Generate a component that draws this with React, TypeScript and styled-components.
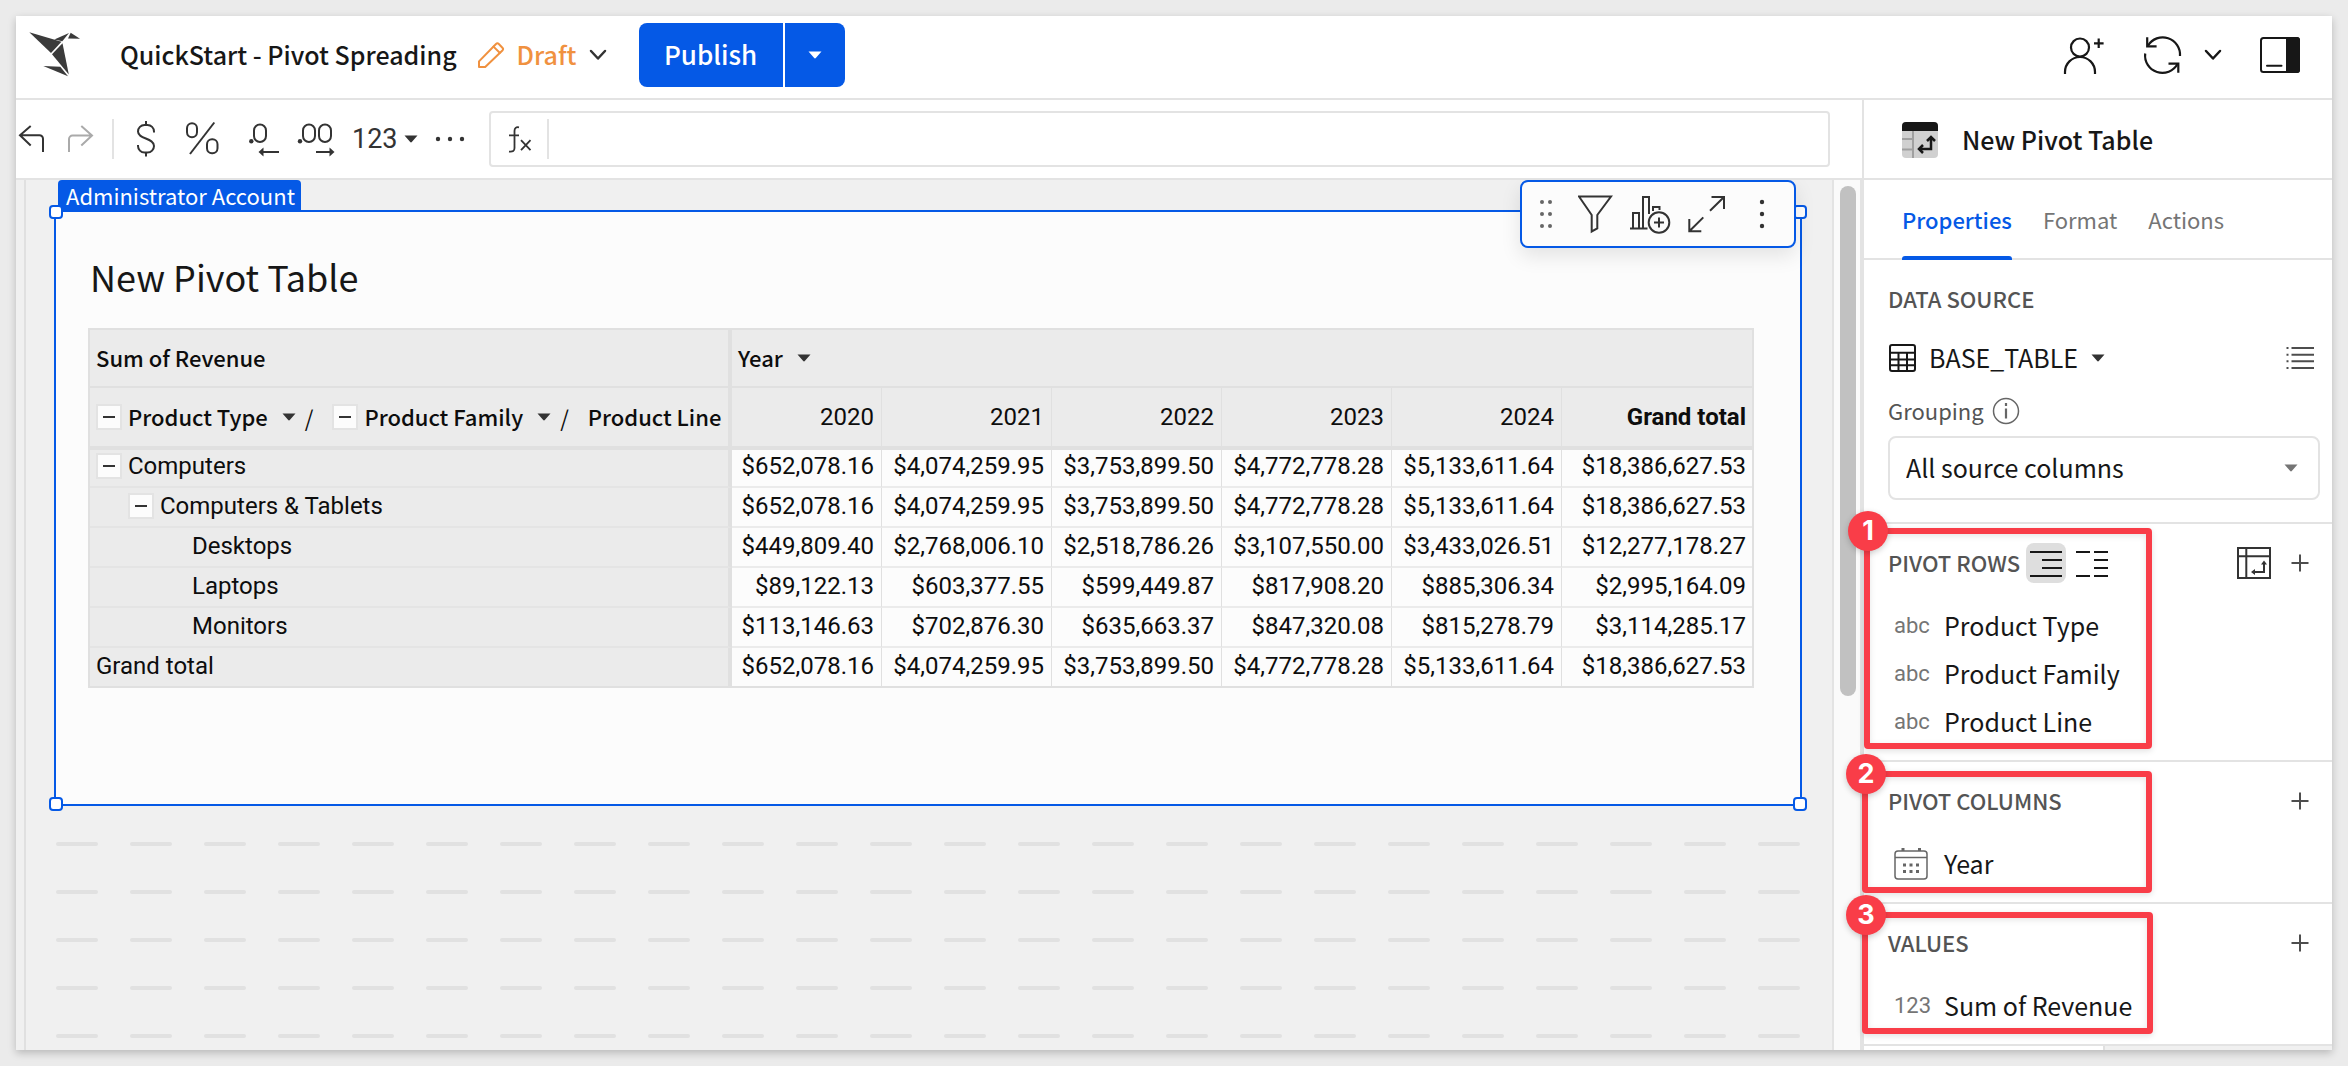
import React from "react";
import styled, { createGlobalStyle, css } from "styled-components";

const color = {
  page: "#ebebeb",
  white: "#ffffff",
  surface: "#fcfcfc",
  canvas: "#f0f0f0",
  head: "#ebebeb",
  line: "#e3e3e3",
  tableLine: "#e0e0e0",
  blue: "#0559e6",
  red: "#f93d48",
  orange: "#f0913f",
  ink: "#171717",
  icon: "#333333",
  label: "#545454",
  muted: "#757575",
};

const sans = `"Noto Sans CJK SC", "Noto Sans", sans-serif`;
const roboto = `Roboto, "Liberation Sans", sans-serif`;

const GlobalStyle = createGlobalStyle`
  *, *::before, *::after { box-sizing: border-box; }
  body {
    margin: 0;
    background: ${color.page};
    color: ${color.ink};
    font-family: ${sans};
    font-size: 25px;
    line-height: 32px;
  }
  svg { display: block; flex: none; }
`;

/* ---------- shared ---------- */

const plainButton = css`
  display: flex;
  align-items: center;
  margin: 0;
  padding: 0;
  border: 0;
  background: none;
  color: inherit;
  font: inherit;
  cursor: pointer;
`;

const PlainButton = styled.button<{ $gap?: number }>`
  ${plainButton}
  gap: ${(p) => p.$gap ?? 0}px;
`;

const IconButton = styled.button<{ $width?: number; $active?: boolean }>`
  ${plainButton}
  justify-content: center;
  width: ${(p) => p.$width ?? 40}px;
  height: 40px;
  border-radius: 8px;
  background: ${(p) => (p.$active ? "#dedede" : "none")};
`;

/* Keeps capital letters optically centred inside bars. */
const Label = styled.span<{ $size?: number; $weight?: number; $color?: string }>`
  padding-bottom: 3px;
  white-space: nowrap;
  font-size: ${(p) => p.$size ?? 25}px;
  font-weight: ${(p) => p.$weight ?? 400};
  color: ${(p) => p.$color ?? "inherit"};
`;

type IconProps = {
  w: number;
  h: number;
  stroke?: string;
  sw?: number;
  round?: boolean;
  children: React.ReactNode;
};

const Icon = ({ w, h, stroke = color.icon, sw = 2, round, children }: IconProps) => (
  <svg
    width={w}
    height={h}
    viewBox={`0 0 ${w} ${h}`}
    fill="none"
    stroke={stroke}
    strokeWidth={sw}
    strokeLinecap={round ? "round" : "butt"}
    strokeLinejoin={round ? "round" : "miter"}
    aria-hidden="true"
  >
    {children}
  </svg>
);

const Caret = ({ fill = color.icon }: { fill?: string }) => (
  <Icon w={14} h={8} stroke="none">
    <path d="M0.5 0.5h13L8 6.8a1.3 1.3 0 0 1-2 0z" fill={fill} />
  </Icon>
);

const Chevron = ({ stroke = color.icon }: { stroke?: string }) => (
  <Icon w={18} h={12} stroke={stroke} sw={2.5} round>
    <path d="M2 2l7 7.5L16 2" />
  </Icon>
);

const Plus = () => (
  <Icon w={18} h={18} stroke="#4d4d4d">
    <path d="M9 0.5v17M0.5 9h17" />
  </Icon>
);

/* ---------- app shell ---------- */

const Shell = styled.div`
  display: flex;
  flex-direction: column;
  height: calc(100vh - 32px);
  margin: 16px;
  overflow: hidden;
  background: ${color.white};
  box-shadow: 0 3px 8px rgba(0, 0, 0, 0.22);
`;

const Backdrop = styled.div`
  display: flow-root;
`;

const Header = styled.header`
  display: flex;
  flex: none;
  align-items: center;
  height: 84px;
  padding: 0 32px 4px 12px;
  border-bottom: 2px solid ${color.line};
`;

const DocTitle = styled.h1`
  margin: 0 20px 0 38px;
  padding-bottom: 2px;
  white-space: nowrap;
  font-size: 25px;
  font-weight: 500;
`;

const SplitButton = styled.div`
  display: flex;
  gap: 2px;
  height: 64px;
  margin: 0 auto 0 32px;
`;

const PrimaryButton = styled.button<{ $side: "left" | "right" }>`
  ${plainButton}
  justify-content: center;
  width: ${(p) => (p.$side === "left" ? 144 : 60)}px;
  border-radius: ${(p) => (p.$side === "left" ? "8px 0 0 8px" : "0 8px 8px 0")};
  background: ${color.blue};
  color: ${color.white};
`;

const HeaderActions = styled.div`
  display: flex;
  align-items: center;
  gap: 38px;
`;

const RefreshGroup = styled.div`
  display: flex;
  align-items: center;
  gap: 20px;
`;

const Body = styled.div`
  display: flex;
  flex: 1;
  min-height: 0;
`;

const Main = styled.main`
  display: flex;
  flex: 1;
  flex-direction: column;
  min-width: 0;
`;

/* ---------- toolbar ---------- */

const Toolbar = styled.div`
  display: flex;
  flex: none;
  align-items: center;
  height: 80px;
  padding: 0 32px 0 2px;
  border-bottom: 2px solid ${color.line};
`;

const ToolGroup = styled.div<{ $gap: number; $before?: number }>`
  display: flex;
  align-items: center;
  gap: ${(p) => p.$gap}px;
  margin-left: ${(p) => p.$before ?? 0}px;
`;

const Divider = styled.span<{ $before: number; $after: number }>`
  flex: none;
  width: 2px;
  height: 40px;
  margin: 0 ${(p) => p.$after}px 0 ${(p) => p.$before}px;
  background: ${color.line};
`;

const NumberFormat = styled.span`
  font-family: ${roboto};
  font-size: 27px;
  color: ${color.icon};
`;

const FormulaBar = styled.div`
  display: flex;
  flex: 1;
  align-items: center;
  height: 56px;
  margin-left: 24px;
  padding-left: 16px;
  border: 2px solid ${color.line};
  border-radius: 4px;
`;

const FormulaInput = styled.input`
  flex: 1;
  min-width: 0;
  height: 40px;
  padding: 0 12px;
  border: 0;
  outline: 0;
  background: none;
  color: inherit;
  font: inherit;
`;

/* ---------- canvas ---------- */

const Workspace = styled.div`
  display: flex;
  flex: 1;
  min-height: 0;
  padding-left: 8px;
  overflow: hidden;
  background: ${color.canvas};
`;

const Canvas = styled.div`
  flex: 1;
  min-width: 0;
  padding: 30px 30px 0 28px;
  border-left: 2px solid ${color.tableLine};
`;

const ScrollTrack = styled.div`
  flex: none;
  width: 30px;
  padding: 6px 4px 0 6px;
  border: solid ${color.line};
  border-width: 0 2px;
  background: #fafafa;
`;

const ScrollThumb = styled.div`
  width: 16px;
  height: 59%;
  border-radius: 8px;
  background: #c1c1c1;
`;

const Frame = styled.section`
  position: relative;
  padding: 42px 32px 116px;
  border: 2px solid ${color.blue};
  background: ${color.surface};
`;

const Handle = styled.span<{ $v: "top" | "bottom"; $h: "left" | "right" }>`
  position: absolute;
  ${(p) => p.$v}: -7px;
  ${(p) => p.$h}: -7px;
  width: 14px;
  height: 14px;
  border: 2px solid ${color.blue};
  border-radius: 4px;
  background: ${color.white};
`;

const OwnerTag = styled.div`
  position: absolute;
  bottom: 100%;
  left: 2px;
  height: 32px;
  padding: 0 6px 0 8px;
  border-radius: 4px 4px 0 0;
  background: ${color.blue};
  color: ${color.white};
  font-size: 22px;
  line-height: 30px;
  white-space: nowrap;
`;

const FloatingBar = styled.div`
  position: absolute;
  top: -32px;
  right: 4px;
  display: flex;
  align-items: center;
  gap: 16px;
  height: 68px;
  padding: 0 12px 0 8px;
  border: 2px solid ${color.blue};
  border-radius: 8px;
  background: ${color.surface};
  box-shadow: 0 8px 20px rgba(0, 0, 0, 0.1);
`;

const ElementTitle = styled.h2`
  margin: 0 0 30px 2px;
  font-size: 36px;
  font-weight: 400;
  line-height: 44px;
`;

const DropRow = styled.div`
  display: grid;
  grid-template-columns: repeat(24, 1fr);
  gap: 32px;
  height: 4px;
  margin: 36px 2px 44px;

  & + & {
    margin-top: 44px;
  }
`;

const DropMark = styled.span`
  border-radius: 2px;
  background: #e1e1e1;
`;

/* ---------- pivot table ---------- */

const Pivot = styled.table`
  table-layout: fixed;
  width: 1666px;
  border: 2px solid ${color.tableLine};
  border-collapse: separate;
  border-spacing: 0;
  color: #0d0d0d;
  font-family: ${roboto};
  font-size: 24px;
`;

const HeadCell = styled.th<{ $align?: "left" | "right"; $rowHead?: boolean; $last?: boolean; $bold?: boolean; $sub?: boolean }>`
  height: ${(p) => (p.$sub ? 60 : 58)}px;
  padding: 0 ${(p) => (p.$align === "right" ? (p.$last ? 6 : 7) : 5)}px 0 6px;
  border: solid ${color.tableLine};
  border-width: 0 ${(p) => (p.$rowHead ? 4 : p.$last ? 0 : 1)}px 2px 0;
  background: ${color.head};
  font-weight: ${(p) => (p.$bold ? 700 : 400)};
  text-align: ${(p) => p.$align ?? "left"};
  white-space: nowrap;
`;

const HeadRow = styled.div`
  display: flex;
  align-items: center;
  font-family: ${sans};
  font-size: 22px;
  font-weight: 500;
`;

const HeadName = styled.span`
  padding-bottom: 3px;
`;

const Slash = styled.span`
  margin: 0 19px 0 9px;
  font-weight: 400;
`;

const RowHead = styled.th<{ $depth: number }>`
  height: 40px;
  padding: 0 5px 2px ${(p) => 6 + p.$depth * 32}px;
  border-right: 4px solid ${color.tableLine};
  border-bottom: 2px solid #e4e4e4;
  background: ${color.head};
  font-weight: 400;
  line-height: 36px;
  text-align: left;
`;

const TreeLabel = styled.div`
  display: flex;
  align-items: center;
  height: 36px;
`;

const Cell = styled.td<{ $last?: boolean }>`
  height: 40px;
  padding: 0 ${(p) => (p.$last ? 6 : 7)}px 2px 0;
  border-right: ${(p) => (p.$last ? 0 : 1)}px solid ${color.tableLine};
  border-bottom: 2px solid #ebebeb;
  line-height: 36px;
  text-align: right;
  white-space: nowrap;
`;

const BodyRows = styled.tbody`
  tr:first-child > * {
    box-shadow: inset 0 2px ${color.tableLine};
  }
  tr:last-child > * {
    height: 38px;
    border-bottom: 0;
  }
`;

const ToggleBox = styled.button`
  ${plainButton}
  flex: none;
  justify-content: center;
  width: 26px;
  height: 26px;
  margin-right: 6px;
  border: 2px solid #e3e3e3;
  background: ${color.surface};
`;

const years = ["2020", "2021", "2022", "2023", "2024"];

type PivotRow = { name: string; depth: number; open?: boolean; values: string[] };

const rows: PivotRow[] = [
  { name: "Computers", depth: 0, open: true, values: ["$652,078.16", "$4,074,259.95", "$3,753,899.50", "$4,772,778.28", "$5,133,611.64", "$18,386,627.53"] },
  { name: "Computers & Tablets", depth: 1, open: true, values: ["$652,078.16", "$4,074,259.95", "$3,753,899.50", "$4,772,778.28", "$5,133,611.64", "$18,386,627.53"] },
  { name: "Desktops", depth: 3, values: ["$449,809.40", "$2,768,006.10", "$2,518,786.26", "$3,107,550.00", "$3,433,026.51", "$12,277,178.27"] },
  { name: "Laptops", depth: 3, values: ["$89,122.13", "$603,377.55", "$599,449.87", "$817,908.20", "$885,306.34", "$2,995,164.09"] },
  { name: "Monitors", depth: 3, values: ["$113,146.63", "$702,876.30", "$635,663.37", "$847,320.08", "$815,278.79", "$3,114,285.17"] },
  { name: "Grand total", depth: 0, values: ["$652,078.16", "$4,074,259.95", "$3,753,899.50", "$4,772,778.28", "$5,133,611.64", "$18,386,627.53"] },
];

const Toggle = ({ name }: { name: string }) => (
  <ToggleBox aria-label={`Collapse ${name}`}>
    <Icon w={12} h={2}>
      <path d="M0 1h12" />
    </Icon>
  </ToggleBox>
);

const PivotTable = () => (
  <Pivot>
    <colgroup>
      <col width={642} />
      <col width={150} />
      <col width={170} />
      <col width={170} />
      <col width={170} />
      <col width={170} />
      <col width={190} />
    </colgroup>
    <thead>
      <tr>
        <HeadCell $rowHead>
          <HeadRow>
            <HeadName>Sum of Revenue</HeadName>
          </HeadRow>
        </HeadCell>
        <HeadCell colSpan={6} $last>
          <HeadRow>
            <PlainButton $gap={14}>
              <HeadName>Year</HeadName>
              <Caret />
            </PlainButton>
          </HeadRow>
        </HeadCell>
      </tr>
      <tr>
        <HeadCell $rowHead $sub>
          <HeadRow>
            {["Product Type", "Product Family"].map((name) => (
              <React.Fragment key={name}>
                <Toggle name={name} />
                <PlainButton $gap={14}>
                  <HeadName>{name}</HeadName>
                  <Caret />
                </PlainButton>
                <Slash>/</Slash>
              </React.Fragment>
            ))}
            <HeadName>Product Line</HeadName>
          </HeadRow>
        </HeadCell>
        {years.map((y) => (
          <HeadCell key={y} $align="right" $sub>
            {y}
          </HeadCell>
        ))}
        <HeadCell $align="right" $last $bold $sub>
          Grand total
        </HeadCell>
      </tr>
    </thead>
    <BodyRows>
      {rows.map((row) => (
        <tr key={row.name}>
          <RowHead scope="row" $depth={row.depth}>
            <TreeLabel>
              {row.open && <Toggle name={row.name} />}
              {row.name}
            </TreeLabel>
          </RowHead>
          {row.values.map((v, i) => (
            <Cell key={i} $last={i === row.values.length - 1}>
              {v}
            </Cell>
          ))}
        </tr>
      ))}
    </BodyRows>
  </Pivot>
);

/* ---------- sidebar ---------- */

const Sidebar = styled.aside`
  display: flex;
  flex: none;
  flex-direction: column;
  width: 470px;
  border-left: 2px solid ${color.line};
`;

const PanelHead = styled.div`
  display: flex;
  flex: none;
  align-items: center;
  gap: 24px;
  height: 80px;
  padding: 2px 0 0 38px;
  border-bottom: 2px solid ${color.line};
`;

const Tabs = styled.div`
  display: flex;
  flex: none;
  gap: 31px;
  height: 80px;
  padding: 2px 0 0 38px;
  border-bottom: 2px solid ${color.line};
`;

const Tab = styled.button<{ $active?: boolean }>`
  ${plainButton}
  position: relative;
  color: ${(p) => (p.$active ? color.blue : color.muted)};

  &::after {
    content: "";
    position: absolute;
    right: 0;
    bottom: -2px;
    left: 0;
    height: 4px;
    border-radius: 3px 3px 0 0;
    background: ${(p) => (p.$active ? color.blue : "none")};
  }
`;

const Section = styled.section<{ $bottom?: number }>`
  position: relative;
  flex: none;
  padding: 0 12px ${(p) => p.$bottom ?? 14}px 24px;
  border-bottom: 2px solid ${color.line};
`;

const SectionHead = styled.div`
  display: flex;
  align-items: center;
  gap: 6px;
  height: 78px;
`;

const SectionTitle = styled.h3`
  margin: 0;
  padding-bottom: 3px;
  white-space: nowrap;
  color: ${color.label};
  font-size: 22px;
  font-weight: 500;
`;

const Spacer = styled.span`
  flex: 1;
`;

const SourceRow = styled.div`
  display: flex;
  align-items: center;
  justify-content: space-between;
  height: 40px;
`;

const GroupingRow = styled.div`
  display: flex;
  align-items: center;
  gap: 8px;
  height: 50px;
  margin-top: 8px;
`;

const FieldLabel = styled.label`
  padding-bottom: 3px;
  color: ${color.label};
  font-size: 22px;
`;

const SelectBox = styled.div`
  display: grid;
  align-items: center;

  & > * {
    grid-area: 1 / 1;
  }
  & > svg {
    margin-right: 22px;
    justify-self: end;
    pointer-events: none;
  }
`;

const Select = styled.select`
  width: 100%;
  height: 64px;
  padding: 0 48px 3px 16px;
  border: 2px solid ${color.line};
  border-radius: 8px;
  appearance: none;
  background: ${color.white};
  color: inherit;
  font: inherit;
`;

const FieldList = styled.ul`
  margin: 0;
  padding: 0 0 0 6px;
  list-style: none;
`;

const Field = styled.li`
  display: flex;
  align-items: center;
  height: 48px;
`;

const FieldType = styled.span`
  flex: none;
  width: 50px;
  color: ${color.muted};
  font-family: ${roboto};
  font-size: 22px;
`;

const Callout = styled.div<{ $left: number; $top: number; $width: number; $height: number }>`
  position: absolute;
  top: ${(p) => p.$top}px;
  left: ${(p) => p.$left}px;
  z-index: 1;
  width: ${(p) => p.$width}px;
  height: ${(p) => p.$height}px;
  border: 6px solid ${color.red};
  border-radius: 4px;
  box-shadow: 0 2px 6px rgba(0, 0, 0, 0.12), inset 0 2px 6px rgba(0, 0, 0, 0.1);
  pointer-events: none;
`;

const CalloutBadge = styled.span`
  position: absolute;
  top: -23px;
  left: -22px;
  width: 40px;
  height: 40px;
  border-radius: 20px;
  background: ${color.red};
  box-shadow: 0 2px 6px rgba(0, 0, 0, 0.2);
  color: ${color.white};
  font-family: Inter, "Liberation Sans", sans-serif;
  font-size: 27px;
  font-weight: 700;
  line-height: 40px;
  text-align: center;
`;

const BottomBar = styled.div`
  display: flex;
  flex: 1;
  background: ${color.canvas};
`;

const BottomStrip = styled.div`
  width: 241px;
  border-right: 2px solid ${color.tableLine};
  background: ${color.white};
`;

const CalendarIcon = () => (
  <Icon w={34} h={32} stroke="#666666" sw={1.5}>
    <rect x="1" y="3" width="32" height="28" rx="3" />
    <path d="M1 9.5h32" />
    <path d="M9 0v3M25.5 0v3" strokeWidth="3" />
    <path d="M9 17h3M15.5 17h3M22 17h3M9 23.5h3M15.5 23.5h3M22 23.5h3" strokeWidth="3" />
  </Icon>
);

const rowFields = ["Product Type", "Product Family", "Product Line"];

const App = () => (
  <Backdrop>
    <GlobalStyle />
    <Shell>
      <Header>
        <Icon w={54} h={48} stroke="none">
          <g fill="#3b3b3b">
            <path d="M1.3 1.2L33.5 10.7 23 22z" />
            <path d="M26.3 8.4L41 2 34.3 10.2z" />
            <path d="M42.7 1.7L52 7.7 40 7.4z" />
            <path d="M34.5 12.3L40.8 43.5 24 23.3z" />
            <path d="M15.3 35L32.3 35.8 40 45.3z" />
          </g>
        </Icon>
        <DocTitle>QuickStart - Pivot Spreading</DocTitle>
        <PlainButton $gap={12}>
          <Icon w={28} h={28} stroke={color.orange} round>
            <path d="M2 26v-5.6L19 3a2 2 0 0 1 2.8 0l3.6 3.7a2 2 0 0 1 0 2.8L8.2 26z" />
            <path d="M16.5 5.6l6.2 6.2" />
          </Icon>
          <Label $weight={500} $color={color.orange}>
            Draft
          </Label>
          <Chevron />
        </PlainButton>
        <SplitButton>
          <PrimaryButton $side="left">
            <Label $size={26} $weight={500}>
              Publish
            </Label>
          </PrimaryButton>
          <PrimaryButton $side="right" aria-label="Publish options">
            <Caret fill={color.white} />
          </PrimaryButton>
        </SplitButton>
        <HeaderActions>
          <PlainButton aria-label="Share">
            <Icon w={42} h={40} stroke={color.ink} sw={2.2}>
              <circle cx="18" cy="12.5" r="9" />
              <path d="M3 39v-2a15 15 0 0 1 30 0v2" />
              <path d="M36.7 3.5v9.6M32 8.3h9.6" />
            </Icon>
          </PlainButton>
          <RefreshGroup>
            <PlainButton aria-label="Refresh">
              <Icon w={42} h={42} stroke={color.ink} sw={2.2}>
                <path d="M6 11.6A17.3 17.3 0 0 1 38 22M3.2 19.5A17.3 17.3 0 0 0 35.5 30" />
                <path d="M5.2 3.3v9h9.4M26.5 29.6h9.8v9.2" />
              </Icon>
            </PlainButton>
            <PlainButton aria-label="Refresh options">
              <Chevron stroke={color.ink} />
            </PlainButton>
          </RefreshGroup>
          <PlainButton aria-label="Toggle panel">
            <Icon w={40} h={36} stroke={color.ink}>
              <rect x="1" y="1" width="38" height="34" rx="2.5" />
              <path d="M26 0h11a3 3 0 0 1 3 3v30a3 3 0 0 1-3 3H26z" fill={color.ink} stroke="none" />
              <path d="M7 28.7h14.5" strokeLinecap="round" />
            </Icon>
          </PlainButton>
        </HeaderActions>
      </Header>

      <Body>
        <Main>
          <Toolbar>
            <ToolGroup $gap={20}>
              <PlainButton aria-label="Undo">
                <Icon w={28} h={28}>
                  <path d="M12.7 1L2 10.2l10.7 10.3M2 10.2h19.5a3.5 3.5 0 0 1 3.5 3.5V27" />
                </Icon>
              </PlainButton>
              <PlainButton aria-label="Redo">
                <Icon w={28} h={28} stroke="#aaaaaa">
                  <path d="M15.3 1L26 10.6 15.3 20.5M26 10.6H6.5A3.5 3.5 0 0 0 3 14.1V27" />
                </Icon>
              </PlainButton>
            </ToolGroup>
            <Divider $before={18} $after={22} />
            <ToolGroup $gap={27}>
              <PlainButton aria-label="Currency">
                <Icon w={22} h={38}>
                  <path d="M18 12.5v-1A6.5 6.5 0 0 0 11.5 5h-3A6.5 6.5 0 0 0 2 11.5C2 19.5 18 17.5 18 26a6.5 6.5 0 0 1-6.5 6.5h-3A6.5 6.5 0 0 1 2 26v-1M10 1v4M10 32.5v4" />
                </Icon>
              </PlainButton>
              <PlainButton aria-label="Percent">
                <Icon w={36} h={36}>
                  <rect x="2" y="2.3" width="10" height="14" rx="5" />
                  <rect x="22" y="18.3" width="10.5" height="14" rx="5" />
                  <path d="M29.3 1.5L5 33" />
                </Icon>
              </PlainButton>
              <PlainButton aria-label="Decrease decimals">
                <Icon w={32} h={38}>
                  <circle cx="3.3" cy="21.3" r="2.2" fill={color.icon} stroke="none" />
                  <rect x="6" y="4.5" width="12" height="17.5" rx="6" />
                  <path d="M13 32h18" />
                  <path d="M10.5 32l5-4.5v9z" fill={color.icon} stroke="none" />
                </Icon>
              </PlainButton>
            </ToolGroup>
            <ToolGroup $gap={17} $before={17}>
              <PlainButton aria-label="Increase decimals">
                <Icon w={38} h={38}>
                  <circle cx="3" cy="21.3" r="2.2" fill={color.icon} stroke="none" />
                  <rect x="6" y="4.5" width="12" height="17.5" rx="6" />
                  <rect x="22" y="4.5" width="12" height="17.5" rx="6" />
                  <path d="M19 32h16" />
                  <path d="M37.5 32l-5-4.5v9z" fill={color.icon} stroke="none" />
                </Icon>
              </PlainButton>
              <PlainButton $gap={6}>
                <NumberFormat>123</NumberFormat>
                <Caret />
              </PlainButton>
              <PlainButton aria-label="More formats">
                <Icon w={30} h={6} stroke="none">
                  <g fill={color.icon}>
                    <circle cx="3" cy="3" r="2.2" />
                    <circle cx="15" cy="3" r="2.2" />
                    <circle cx="27" cy="3" r="2.2" />
                  </g>
                </Icon>
              </PlainButton>
            </ToolGroup>
            <FormulaBar>
              <label htmlFor="formula">
                <Icon w={26} h={28} sw={1.8}>
                  <path d="M12 2.3C9 1.8 7.5 3 7.5 6v17c0 3-1.5 4-5.5 3.6M2 10.3h10M14 15.2l9.5 10M23.5 15.2l-9.5 10" />
                </Icon>
              </label>
              <Divider $before={14} $after={0} />
              <FormulaInput id="formula" aria-label="Formula" />
            </FormulaBar>
          </Toolbar>

          <Workspace>
            <Canvas>
              <Frame>
                <OwnerTag>Administrator Account</OwnerTag>
                <Handle $v="top" $h="left" />
                <Handle $v="top" $h="right" />
                <Handle $v="bottom" $h="left" />
                <Handle $v="bottom" $h="right" />
                <ElementTitle>New Pivot Table</ElementTitle>
                <PivotTable />
                <FloatingBar>
                  <IconButton $width={32} aria-label="Drag">
                    <Icon w={12} h={28} stroke="none">
                      <g fill="#666666">
                        {[2, 14, 26].map((y) => (
                          <React.Fragment key={y}>
                            <circle cx="2" cy={y} r="2" />
                            <circle cx="10" cy={y} r="2" />
                          </React.Fragment>
                        ))}
                      </g>
                    </Icon>
                  </IconButton>
                  <IconButton $width={36} aria-label="Filter">
                    <Icon w={36} h={40}>
                      <path d="M1 2.5h32L19.3 21v13.5l-5.6 3V21z" />
                    </Icon>
                  </IconButton>
                  <IconButton $width={42} aria-label="Add child chart">
                    <Icon w={42} h={40}>
                      <path d="M0 34.5h17.5M3 34V19h6v15M13 34V3h6v17M23 17v-4h6.5v3" />
                      <circle cx="29" cy="28.5" r="10.3" />
                      <path d="M29 23.5v10M24 28.5h10" />
                    </Icon>
                  </IconButton>
                  <IconButton $width={38} aria-label="Maximize">
                    <Icon w={38} h={38}>
                      <path d="M23.5 2H36v12M35.500 2.500L22 15.800M1.300 24v12.200h12M1.800 35.700l13.500-13.300" />
                    </Icon>
                  </IconButton>
                  <IconButton aria-label="More">
                    <Icon w={6} h={30} stroke="none">
                      <g fill={color.icon}>
                        <circle cx="3" cy="3" r="2.2" />
                        <circle cx="3" cy="15" r="2.2" />
                        <circle cx="3" cy="27" r="2.2" />
                      </g>
                    </Icon>
                  </IconButton>
                </FloatingBar>
              </Frame>
              {Array.from({ length: 5 }, (_, r) => (
                <DropRow key={r}>
                  {Array.from({ length: 24 }, (_, c) => (
                    <DropMark key={c} />
                  ))}
                </DropRow>
              ))}
            </Canvas>
            <ScrollTrack>
              <ScrollThumb />
            </ScrollTrack>
          </Workspace>
        </Main>

        <Sidebar>
          <PanelHead>
            <Icon w={36} h={36} stroke="#a0a0a0">
              <rect width="36" height="36" rx="4" fill="#d0d0d0" stroke="none" />
              <path d="M11 9v27M0 17h10M0 27.5h10" />
              <path d="M0 9V4a4 4 0 0 1 4-4h28a4 4 0 0 1 4 4v5z" fill={color.ink} stroke="none" />
              <path d="M29 16v11H18M25 19l4-4 4 4M21 23l-4 4 4 4" stroke={color.ink} strokeWidth="2.5" />
            </Icon>
            <Label $weight={500}>New Pivot Table</Label>
          </PanelHead>
          <Tabs>
            <Tab $active>
              <Label $size={22} $weight={500}>Properties</Label>
            </Tab>
            <Tab>
              <Label $size={22}>Format</Label>
            </Tab>
            <Tab>
              <Label $size={22}>Actions</Label>
            </Tab>
          </Tabs>

          <Section $bottom={22}>
            <SectionHead>
              <SectionTitle>DATA SOURCE</SectionTitle>
            </SectionHead>
            <SourceRow>
              <PlainButton $gap={13}>
                <Icon w={28} h={28} stroke={color.ink}>
                  <rect x="2" y="1" width="25" height="26" rx="2" />
                  <path d="M2 8.7h25M2 15.5h25M2 21.3h25M10.5 8.7V27M19 8.7V27" />
                </Icon>
                <Label>BASE_TABLE</Label>
                <Caret />
              </PlainButton>
              <IconButton aria-label="Column list">
                <Icon w={28} h={24} stroke="#4d4d4d">
                  <path d="M5.5 2H28M5.5 8.7H28M5.5 15.3H28M5.5 22H28M0.5 2h2M0.5 8.7h2M0.5 15.3h2M0.5 22h2" />
                </Icon>
              </IconButton>
            </SourceRow>
            <GroupingRow>
              <FieldLabel htmlFor="grouping">Grouping</FieldLabel>
              <Icon w={28} h={28} stroke="#666666" sw={1.5}>
                <circle cx="14" cy="14" r="12.5" />
                <path d="M14 11.5v10M14 6v3" strokeWidth="2.2" />
              </Icon>
            </GroupingRow>
            <SelectBox>
              <Select id="grouping" defaultValue="all">
                <option value="all">All source columns</option>
              </Select>
              <Caret fill="#757575" />
            </SelectBox>
          </Section>

          <Section>
            <SectionHead>
              <SectionTitle>PIVOT ROWS</SectionTitle>
              <IconButton $active aria-label="Combined rows">
                <Icon w={40} h={40} stroke={color.ink}>
                  <path d="M4 9h32M16 17h20M16 25h20M4 33h32" />
                </Icon>
              </IconButton>
              <IconButton aria-label="Separate rows">
                <Icon w={40} h={40} stroke={color.ink}>
                  <path d="M4 9h14M22 9h14M22 17h14M22 25h14M4 33h14M22 33h14" />
                </Icon>
              </IconButton>
              <Spacer />
              <IconButton aria-label="Swap rows and columns">
                <Icon w={34} h={32}>
                  <path d="M1 1h32v30H1zM9.3 1v30M1 9.3h32" />
                  <path d="M27 16v9H17" />
                  <path d="M27 13.5l3 4h-6zM14 25l4-3v6z" fill={color.icon} stroke="none" />
                </Icon>
              </IconButton>
              <IconButton aria-label="Add pivot row">
                <Plus />
              </IconButton>
            </SectionHead>
            <FieldList>
              {rowFields.map((name) => (
                <Field key={name}>
                  <FieldType>abc</FieldType>
                  <Label>{name}</Label>
                </Field>
              ))}
            </FieldList>
            <Callout $left={0} $top={4} $width={288} $height={221}>
              <CalloutBadge>1</CalloutBadge>
            </Callout>
          </Section>

          <Section>
            <SectionHead>
              <SectionTitle>PIVOT COLUMNS</SectionTitle>
              <Spacer />
              <IconButton aria-label="Add pivot column">
                <Plus />
              </IconButton>
            </SectionHead>
            <FieldList>
              <Field>
                <FieldType>
                  <CalendarIcon />
                </FieldType>
                <Label>Year</Label>
              </Field>
            </FieldList>
            <Callout $left={-2} $top={9} $width={290} $height={122}>
              <CalloutBadge>2</CalloutBadge>
            </Callout>
          </Section>

          <Section>
            <SectionHead>
              <SectionTitle>VALUES</SectionTitle>
              <Spacer />
              <IconButton aria-label="Add value">
                <Plus />
              </IconButton>
            </SectionHead>
            <FieldList>
              <Field>
                <FieldType>123</FieldType>
                <Label>Sum of Revenue</Label>
              </Field>
            </FieldList>
            <Callout $left={-2} $top={8} $width={291} $height={122}>
              <CalloutBadge>3</CalloutBadge>
            </Callout>
          </Section>
          <BottomBar>
            <BottomStrip />
          </BottomBar>
        </Sidebar>
      </Body>
    </Shell>
  </Backdrop>
);

export default App;
